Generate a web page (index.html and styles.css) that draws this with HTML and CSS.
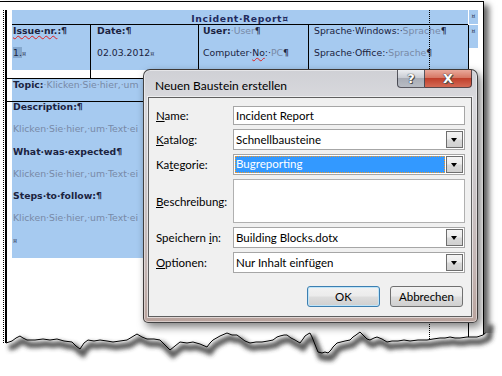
FILE: index.html
```html
<!DOCTYPE html>
<html>
<head>
  <title>Neuen Baustein erstellen</title>
  <link rel="stylesheet" href="styles.css">
</head>
<body>
  <div class="canvas">
    <div class="sheet">
      <div class="margin-guide"></div>
      <div class="dots">
        <div class="edge">
          <div class="row row-title">
            <div class="title-cell">Incident·Report¤</div>
            <div class="mark">¤</div>
          </div>
          <div class="row row-info">
            <div class="cell c1">
              <p><b class="squiggle">Issue·nr.</b><b>:¶</b></p>
              <p><span class="hl">1.</span><span class="end">¤</span></p>
            </div>
            <div class="cell c2">
              <p><b>Date:¶</b></p>
              <p>02.03.2012<span class="end">¤</span></p>
            </div>
            <div class="cell c3">
              <p><b>User:</b><span class="ph">·User</span>¶</p>
              <p>Computer·<span class="squiggle">No</span>:·<span class="ph">PC</span>¶</p>
            </div>
            <div class="cell c4">
              <p>Sprache·Windows:·<span class="ph">Sprache</span>¶</p>
              <p>Sprache·Office:·<span class="ph">Sprache</span>¶</p>
            </div>
            <div class="mark mark-tall">¤</div>
          </div>
          <!-- the dialog hides these rows right of x=143 -->
          <div class="wide topic">
            <p><b>Topic:</b><span class="ph">·Klicken·Sie·hier,·um</span></p>
          </div>
          <div class="wide desc">
            <p><b>Description:¶</b></p>
            <p class="ph">Klicken·Sie·hier,·um·Text·ei</p>
            <p><b>What·was·expected¶</b></p>
            <p class="ph">Klicken·Sie·hier,·um·Text·ei</p>
            <p><b>Steps·to·follow:¶</b></p>
            <p class="ph">Klicken·Sie·hier,·um·Text·ei</p>
            <p class="end">¤</p>
          </div>
          <div class="tail"></div>
        </div>
      </div>
    </div>

    <div class="dialog">
      <div class="titlebar">
        <span class="title">Neuen Baustein erstellen</span>
        <div class="caption-btns">
          <span class="cap-btn help">?</span>
          <span class="cap-btn close">X</span>
        </div>
      </div>
      <div class="client">
        <div class="form">
          <label><u>N</u>ame:</label>
          <div class="field">Incident Report</div>

          <label><u>K</u>atalog:</label>
          <div class="field combo">Schnellbausteine<span class="drop"></span></div>

          <label>Ka<u>t</u>egorie:</label>
          <div class="field combo"><span class="selected">Bugreporting</span><span class="drop"></span></div>

          <label><u>B</u>eschreibung:</label>
          <div class="field area"></div>

          <label>Speichern <u>i</u>n:</label>
          <div class="field combo">Building Blocks.dotx<span class="drop"></span></div>

          <label><u>O</u>ptionen:</label>
          <div class="field combo">Nur Inhalt einfügen<span class="drop"></span></div>
        </div>
        <div class="actions">
          <button class="btn default">OK</button>
          <button class="btn">Abbrechen</button>
        </div>
      </div>
    </div>

    <svg class="tear" width="502" height="376" viewBox="0 0 502 376">
      <defs>
        <filter id="soft" x="-5%" y="-50%" width="110%" height="200%">
          <feGaussianBlur stdDeviation="2.2"/>
        </filter>
      </defs>
      <polygon fill="#fff" points="0,343 6,343 9,342 12,341 16,338 20,336 23,338 27,340 35,340 43,339 50,340 57,339 64,341 72,342 76,346 80,349 84,343 88,340 94,341 100,340 107,341 113,342 120,341 127,340 132,337 137,334 142,337 147,339 154,339 160,340 165,345 170,350 175,346 180,342 187,343 193,342 200,344 207,347 210,343 213,340 220,336 227,333 232,335 237,335 241,338 245,341 250,343 256,342 262,342 268,341 273,340 277,337 280,336 284,335 287,335 291,338 295,340 300,343 303,339 305,336 308,334 310,333 312,337 314,342 316,347 318,352 322,353 325,352 328,353 331,350 333,347 337,343 341,342 345,341 350,340 353,337 356,335 360,332 362,334 364,336 367,339 370,340 374,338 377,337 382,339 387,342 392,341 398,341 404,340 410,341 418,340 427,340 433,339 440,338 445,338 450,337 455,338 460,338 467,337 472,337 477,337 480,336 483,335 486,333 502,333 502,376 0,376"/>
      <polyline filter="url(#soft)" transform="translate(3,5)" fill="none" stroke="#3a3a3a" stroke-opacity="0.85" stroke-width="6" points="6,343 9,342 12,341 16,338 20,336 23,338 27,340 35,340 43,339 50,340 57,339 64,341 72,342 76,346 80,349 84,343 88,340 94,341 100,340 107,341 113,342 120,341 127,340 132,337 137,334 142,337 147,339 154,339 160,340 165,345 170,350 175,346 180,342 187,343 193,342 200,344 207,347 210,343 213,340 220,336 227,333 232,335 237,335 241,338 245,341 250,343 256,342 262,342 268,341 273,340 277,337 280,336 284,335 287,335 291,338 295,340 300,343 303,339 305,336 308,334 310,333 312,337 314,342 316,347 318,352 322,353 325,352 328,353 331,350 333,347 337,343 341,342 345,341 350,340 353,337 356,335 360,332 362,334 364,336 367,339 370,340 374,338 377,337 382,339 387,342 392,341 398,341 404,340 410,341 418,340 427,340 433,339 440,338 445,338 450,337 455,338 460,338 467,337 472,337 477,337 480,336 483,335 486,333 488,320"/>
      <polyline fill="none" stroke="#000" stroke-width="1" points="6,343 9,342 12,341 16,338 20,336 23,338 27,340 35,340 43,339 50,340 57,339 64,341 72,342 76,346 80,349 84,343 88,340 94,341 100,340 107,341 113,342 120,341 127,340 132,337 137,334 142,337 147,339 154,339 160,340 165,345 170,350 175,346 180,342 187,343 193,342 200,344 207,347 210,343 213,340 220,336 227,333 232,335 237,335 241,338 245,341 250,343 256,342 262,342 268,341 273,340 277,337 280,336 284,335 287,335 291,338 295,340 300,343 303,339 305,336 308,334 310,333 312,337 314,342 316,347 318,352 322,353 325,352 328,353 331,350 333,347 337,343 341,342 345,341 350,340 353,337 356,335 360,332 362,334 364,336 367,339 370,340 374,338 377,337 382,339 387,342 392,341 398,341 404,340 410,341 418,340 427,340 433,339 440,338 445,338 450,337 455,338 460,338 467,337 472,337 477,337 480,336 483,335 485.5,333"/>
    </svg>
  </div>
</body>
</html>
```
FILE: styles.css
```css
html, body {
  margin: 0;
  background: #fff;
}
.canvas {
  position: relative;
  width: 502px;
  height: 376px;
  overflow: hidden;
}

/* word page */
.sheet {
  --sel: #a6caf0;
  --ink: #1b2340;
  --hint: #7889a6;

  position: relative;
  z-index: 0;
  margin-top: 1px;
  width: 484px;
  height: 360px;
  padding-top: 8px;
  box-sizing: border-box;
  border-top: 1px solid #000;
  border-right: 1px solid #000;
  background: #fff;
  box-shadow: 5px 4px 6px rgba(0,0,0,0.6);
  font-family: "DejaVu Sans", sans-serif;
  font-size: 9.3px;
  color: var(--ink);
}
.sheet p {
  margin: 0 0 12.3px;
  line-height: 10px;
  white-space: nowrap;
}
.margin-guide {
  position: absolute;
  left: 429px;
  top: 8px;
  height: 335px;
  border-left: 1px dotted #000;
  z-index: 1;
}
.dots {
  margin-left: 3px;
  border-left: 1px dotted #000;
}
.edge {
  margin-left: 1px;
  border-left: 2px solid #000;
  height: 335px;
}
.row {
  display: flex;
  margin-left: 5px;
}
.title-cell {
  width: 456px;
  height: 15px;
  box-sizing: border-box;
  padding-top: 1.5px;
  border-bottom: 1px solid #000;
  background: var(--sel);
  text-align: center;
  font-weight: bold;
  line-height: 14px;
  letter-spacing: 0.6px;
  color: #1f2b5e;
}
.mark {
  width: 9px;
  height: 14px;
  margin-left: 1px;
  background: var(--sel);
  font-size: 6px;
  line-height: 11px;
  text-align: center;
}
.mark-tall {
  height: 23px;
  margin-left: 0;
}
.cell {
  height: 53px;
  box-sizing: border-box;
  padding: 1px 0 0 5px;
  border-right: 1px solid #000;
  background: linear-gradient(var(--sel) 45px, #fff 45px);
}
.c1 { width: 79px; padding-left: 1px; }
.c2 { width: 108px; padding-left: 6px; }
.c3 { width: 110px; padding-left: 4px; }
.c4 { width: 160px; }
.ph {
  color: var(--hint);
}
.end {
  font-size: 6.5px;
}
.hl {
  background: #84a7cd;
}
.squiggle {
  text-decoration: underline wavy #e02020;
  text-decoration-thickness: 1px;
  text-underline-offset: 1px;
}
.wide {
  width: 462px;
  box-sizing: border-box;
  border-top: 1px solid #000;
  border-right: 1px solid #000;
  background: linear-gradient(to right, #fff 5px, var(--sel) 5px);
  padding-left: 6px;
}
.topic {
  height: 23px;
  padding-top: 0.5px;
}
.desc {
  height: 157px;
}
.tail {
  margin-left: 5px;
  width: 457px;
  height: 90px;
  box-sizing: border-box;
  border-right: 1px solid #000;
}

/* dialog */
.dialog {
  position: absolute;
  z-index: 2;
  left: 143px;
  top: 69px;
  width: 335px;
  height: 254px;
  box-sizing: border-box;
  padding: 0 5px 5px 4px;
  border: 1px solid rgba(30,30,30,0.8);
  border-radius: 7px 7px 5px 5px;
  background: linear-gradient(#cfd0d5 0%, #d9d9dd 12%, #cbc6c8 45%, #c3b4b2 80%, #b9a39d 100%);
  box-shadow: inset 0 0 0 1px rgba(255,255,255,0.45), 3px 4px 9px rgba(0,0,0,0.5);
  font-family: Lato, "Noto Sans", sans-serif;
  font-size: 11.5px;
  color: #000;
}
.titlebar {
  display: flex;
  height: 27px;
}
.title {
  padding: 9px 0 0 7px;
  font-size: 12px;
  line-height: 14px;
}
.caption-btns {
  display: flex;
  margin-left: auto;
  height: 19px;
}
.cap-btn {
  display: flex;
  align-items: center;
  justify-content: center;
  height: 18px;
  box-sizing: border-box;
  border: 1px solid rgba(40,40,50,0.75);
  border-top: none;
  font-family: "DejaVu Sans", sans-serif;
  font-weight: bold;
  font-size: 13px;
  color: #fff;
  text-shadow: 0 0 1px #333, 0 0 1px #333, 1px 1px 0 #555;
}
.help {
  width: 28px;
  border-radius: 0 0 0 4px;
  background: linear-gradient(#eceef1 0%, #c9ccd3 45%, #a9adb6 50%, #b8bcc4 100%);
}
.close {
  width: 47px;
  border-left: none;
  border-radius: 0 0 4px 0;
  background: linear-gradient(#e9a99b 0%, #d77865 45%, #c0402c 50%, #d46a55 100%);
}
.client {
  height: 220px;
  box-sizing: border-box;
  padding: 8px 6px 9px 7px;
  border: 1px solid #5f5f5f;
  background: #f0f0f0;
  box-shadow: 0 0 0 1px rgba(255,255,255,0.55);
}
.form {
  display: grid;
  grid-template-columns: 77px 1fr;
  grid-template-rows: 19px 21px 21px 44px 21px 21px;
  row-gap: 4px;
  align-items: center;
}
.form u {
  text-underline-offset: 1px;
}
.field {
  position: relative;
  height: 100%;
  box-sizing: border-box;
  padding: 0 0 0 2px;
  border: 1px solid #a6a6a6;
  background: #fff;
  line-height: 17px;
  white-space: nowrap;
}
.combo {
  line-height: 19px;
}
.area {
  border-color: #b0b0b0;
}
.drop {
  position: absolute;
  right: 1px;
  top: 1px;
  width: 17px;
  height: 17px;
  box-sizing: border-box;
  border: 1px solid #6e6e6e;
  background: linear-gradient(#f4f4f4 0%, #ebebeb 48%, #d9d9d9 52%, #d0d0d0 100%);
}
.drop::after {
  content: "";
  position: absolute;
  left: 4px;
  top: 6px;
  border-left: 3.5px solid transparent;
  border-right: 3.5px solid transparent;
  border-top: 4px solid #000;
}
.selected {
  display: block;
  margin: 1px 19px 1px -1px;
  padding-left: 1px;
  height: 17px;
  box-sizing: border-box;
  outline: 1px dotted #f39a2b;
  outline-offset: -1px;
  background: #3399ff;
  color: #fff;
  line-height: 16px;
}
.actions {
  display: flex;
  justify-content: flex-end;
  gap: 10px;
  margin-top: 13px;
  padding-right: 2px;
}
.btn {
  width: 73px;
  height: 21px;
  padding: 0;
  border: 1px solid #707070;
  border-radius: 3px;
  background: linear-gradient(#f2f2f2 0%, #ebebeb 48%, #dddddd 52%, #cfcfcf 100%);
  font-family: Lato, "Noto Sans", sans-serif;
  font-size: 11.5px;
  color: #000;
}
.btn.default {
  border-color: #3c7fb1;
  box-shadow: inset 0 0 0 1px #bfe4f8;
}
.tear {
  position: absolute;
  z-index: 3;
  left: 0;
  top: 0;
}
```
